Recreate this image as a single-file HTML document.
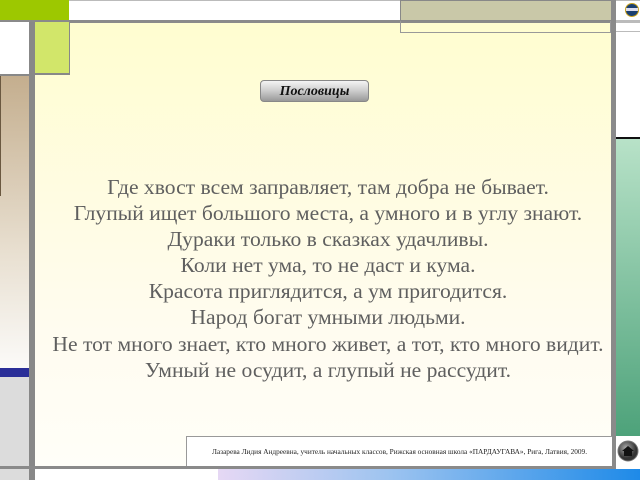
<!DOCTYPE html>
<html><head><meta charset="utf-8"><style>
*{margin:0;padding:0;box-sizing:border-box}
body{width:640px;height:480px;position:relative;overflow:hidden;background:#fff;font-family:"Liberation Serif",serif}
.a{position:absolute}
</style></head><body>
<div class="a" style="left:0;top:0;width:640px;height:1px;background:#bbb"></div>
<div class="a" style="left:0;top:0;width:69px;height:20px;background:#9dc800"></div>
<div class="a" style="left:0;top:20px;width:612px;height:3px;background:#8a8a8a"></div>
<div class="a" style="left:400px;top:0;width:212px;height:21px;background:#c9c8a8;border:1px solid #888"></div>
<div class="a" style="left:35px;top:23px;width:576px;height:444px;background:linear-gradient(#fffdd0,#fffcf0 70%,#fffef8)"></div>
<div class="a" style="left:400px;top:21px;width:211px;height:12px;border:1px solid #999;border-top:none"></div>
<div class="a" style="left:29px;top:22px;width:6px;height:458px;background:#888"></div>
<div class="a" style="left:0;top:22px;width:29px;height:52px;background:#fff"></div>
<div class="a" style="left:0;top:74px;width:29px;height:2px;background:#888"></div>
<div class="a" style="left:0;top:76px;width:29px;height:292px;background:linear-gradient(#c4ae8e,#e8dfd0 60%,#fbfaf8)"></div>
<div class="a" style="left:0;top:76px;width:1px;height:120px;background:#6a5840"></div>
<div class="a" style="left:0;top:368px;width:29px;height:9px;background:#2a2e98"></div>
<div class="a" style="left:0;top:377px;width:29px;height:103px;background:#dcdcdc"></div>
<div class="a" style="left:35px;top:22px;width:35px;height:53px;background:#d2e66a;border-right:1px solid #888;border-bottom:2px solid #888"></div>
<div class="a" style="left:611px;top:0;width:5px;height:468px;background:#8a8a8a"></div>
<div class="a" style="left:616px;top:20px;width:24px;height:3px;background:#bbb"></div>
<div class="a" style="left:616px;top:31px;width:24px;height:1px;background:#bbb"></div>
<div class="a" style="left:616px;top:137px;width:24px;height:2px;background:#111"></div>
<div class="a" style="left:616px;top:139px;width:24px;height:297px;background:linear-gradient(#b8e2c8,#4da27a)"></div>
<svg class="a" style="left:624px;top:2px" width="16" height="17"><circle cx="8" cy="8" r="7" fill="#c9a21c"/><circle cx="8" cy="8" r="6" fill="#1a3f70"/><rect x="2" y="6" width="12" height="3" fill="#dde"/></svg>
<div class="a" style="left:186px;top:436px;width:426px;height:31px;border:1px solid #999;border-right:none;background:#fff"></div>
<div class="a" style="left:0;top:466px;width:616px;height:3px;background:#8a8a8a"></div>
<div class="a" style="left:218px;top:469px;width:422px;height:11px;background:linear-gradient(90deg,#e6d8f4,#9ec4f0 40%,#1e8ae8)"></div>
<div class="a" style="left:212px;top:447px;font-size:7.3px;color:#222;white-space:nowrap">Лазарева Лидия Андреевна,  учитель начальных классов,  Рижская основная школа «ПАРДАУГАВА»,  Рига, Латвия, 2009.</div>
<svg class="a" style="left:617px;top:440px" width="22" height="22"><defs><radialGradient id="g" cx="40%" cy="35%"><stop offset="0" stop-color="#aaa"/><stop offset="1" stop-color="#333"/></radialGradient></defs><circle cx="11" cy="11" r="10" fill="url(#g)" stroke="#777"/><path d="M5 11 L11 6 L17 11 L15 11 L15 16 L7 16 L7 11Z" fill="#111"/></svg>
<div class="a" style="left:260px;top:80px;width:109px;height:22px;border-radius:4px;background:linear-gradient(#f4f4f4,#ccc 50%,#999);border:1px solid #888;text-align:center;font-style:italic;font-weight:bold;font-size:14px;line-height:21px;color:#111">Пословицы</div>
<div class="a" style="left:28px;top:174px;width:600px;text-align:center;font-size:21.6px;line-height:26.1px;color:#5f5f5f;white-space:nowrap">
Где хвост всем заправляет, там добра не бывает.<br>
Глупый ищет большого места, а умного и в углу знают.<br>
Дураки только в сказках удачливы.<br>
Коли нет ума, то не даст и кума.<br>
Красота приглядится, а ум пригодится.<br>
Народ богат умными людьми.<br>
Не тот много знает, кто много живет, а тот, кто много видит.<br>
Умный не осудит, а глупый не рассудит.
</div>
</body></html>
